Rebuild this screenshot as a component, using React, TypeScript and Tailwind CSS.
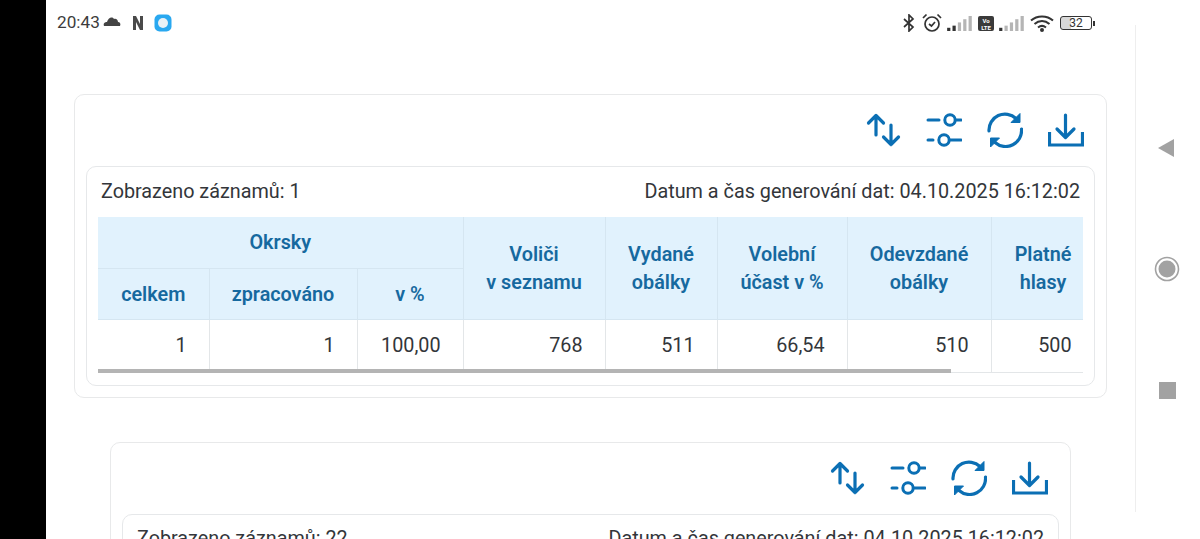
import React from "react";

const C = "#0b6fb4";

function SortIcon() {
  return (
    <svg width="36" height="36" viewBox="0 0 36 36" fill="none" stroke={C} strokeWidth="3.2" strokeLinecap="round" strokeLinejoin="round">
      <path d="M11 3.5V23M3.5 11L11 3.5L18.5 11" />
      <path d="M26 13V32.5M18.5 25L26 32.5L33.5 25" />
    </svg>
  );
}
function SlidersIcon() {
  return (
    <svg width="36" height="36" viewBox="0 0 36 36" fill="none" stroke={C} strokeWidth="3" strokeLinecap="round">
      <path d="M2 8H13" />
      <circle cx="24" cy="8" r="5.2" />
      <path d="M30 8H35" />
      <path d="M2 28H7" />
      <circle cx="18" cy="28" r="5.2" />
      <path d="M24 28H35" />
    </svg>
  );
}
function RefreshIcon() {
  return (
    <svg width="36" height="36" viewBox="0 0 36 36" fill="none">
      <path d="M2 19A16 16 0 0 1 29 6.5" stroke={C} strokeWidth="3.2" strokeLinecap="round" />
      <path d="M34.5 17A16 16 0 0 1 8 30.5" stroke={C} strokeWidth="3.2" strokeLinecap="round" />
      <path d="M33 1.5V10.5H24Z" fill={C} stroke={C} strokeWidth="1" strokeLinejoin="round" />
      <path d="M3.5 35V26H12.5Z" fill={C} stroke={C} strokeWidth="1" strokeLinejoin="round" />
    </svg>
  );
}
function DownloadIcon() {
  return (
    <svg width="36" height="36" viewBox="0 0 36 36" fill="none" stroke={C} strokeWidth="3.2">
      <path d="M1.5 20V33H34.5V20" strokeLinecap="butt" />
      <path d="M17.5 3V25M9 17L17.5 25.5L26 17" strokeLinecap="round" strokeLinejoin="round" />
    </svg>
  );
}

function Toolbar() {
  return (
    <div className="flex justify-end gap-[25px] pr-[11px] pt-[17px] h-[71px]">
      <SortIcon />
      <SlidersIcon />
      <RefreshIcon />
      <DownloadIcon />
    </div>
  );
}

const th = "border-r border-b border-[#d5e6f1] bg-[#e1f2fd] text-[#16699f] font-semibold text-[19.8px] leading-[28px] text-center align-middle p-0 pt-[2px]";
const td = "border-r border-b border-[#e3e6e8] text-[#33363a] text-[19.8px] text-right align-middle p-0 pr-[22px]";

function DataTable() {
  return (
    <div className="relative mx-[11px] overflow-hidden">
      <table className="table-fixed border-collapse w-[1200px]">
        <colgroup>
          <col className="w-[111px]" />
          <col className="w-[148px]" />
          <col className="w-[106px]" />
          <col className="w-[142px]" />
          <col className="w-[112px]" />
          <col className="w-[130px]" />
          <col className="w-[144px]" />
          <col className="w-[144px]" />
          <col className="w-[163px]" />
        </colgroup>
        <thead>
          <tr className="h-[51px]">
            <th colSpan={3} className={th}>Okrsky</th>
            <th rowSpan={2} className={th}>Voliči<br />v seznamu</th>
            <th rowSpan={2} className={th}>Vydané<br />obálky</th>
            <th rowSpan={2} className={th}>Volební<br />účast v %</th>
            <th rowSpan={2} className={th}>Odevzdané<br />obálky</th>
            <th rowSpan={2} className={`${th} pr-[40px]`}>Platné<br />hlasy</th>
            <th rowSpan={2} className={th}></th>
          </tr>
          <tr className="h-[51px]">
            <th className={th}>celkem</th>
            <th className={th}>zpracováno</th>
            <th className={th}>v %</th>
          </tr>
        </thead>
        <tbody>
          <tr className="h-[53px]">
            <td className={td}>1</td>
            <td className={td}>1</td>
            <td className={td}>100,00</td>
            <td className={td}>768</td>
            <td className={td}>511</td>
            <td className={td}>66,54</td>
            <td className={td}>510</td>
            <td className={`${td} pr-[63px]`}>500</td>
            <td className={td}></td>
          </tr>
        </tbody>
      </table>
      <div className="absolute left-0 bottom-0 h-[4px] w-[853px] bg-[#b4b4b4]" />
    </div>
  );
}

function InnerCard({ count }: { count: number }) {
  return (
    <div className="border border-[#e6e8ea] rounded-[10px] bg-white pb-[12px]">
      <div className="flex justify-between items-center h-[50px] pb-[1px] px-[14px] text-[19.8px] text-[#33363a]">
        <span>Zobrazeno záznamů: {count}</span>
        <span>Datum a čas generování dat: 04.10.2025 16:12:02</span>
      </div>
      <DataTable />
    </div>
  );
}

function StatusBar() {
  return (
    <div className="flex justify-between items-center h-[46px] pl-[11px] pr-[40px] text-[#3c3c3c]">
      <div className="flex items-center">
        <span className="text-[17.2px] w-[46px]">20:43</span>
        <svg width="18" height="10" viewBox="0 0 18 10" className="mb-[3px]">
          <path d="M1 10C0 7 2 6 4 6C5 2 9 0 11 3C13 2 15 4 15 6C17 6 18 8 17 10Z" fill="#444" />
        </svg>
        <svg width="12" height="16" viewBox="0 0 12 16" className="ml-[11px]">
          <path d="M1 1H4L8 9V1H11V15H8L4 7V15H1Z" fill="#4a4a4a" />
        </svg>
        <svg width="18" height="18" viewBox="0 0 18 18" className="ml-[10px]">
          <rect x="0.5" y="0.5" width="17" height="17" rx="5" fill="#29a8f0" />
          <circle cx="9" cy="9" r="5" fill="#e9f1f6" />
        </svg>
      </div>
      <div className="flex items-center gap-[5px]">
        <svg width="12" height="18" viewBox="0 0 12 18" fill="none" stroke="#333" strokeWidth="1.7">
          <path d="M1 5L10 13L6 17V1L10 5L1 13" />
        </svg>
        <svg width="20" height="20" viewBox="0 0 20 20" fill="none" stroke="#333" strokeWidth="1.7" className="ml-[2px]">
          <circle cx="10" cy="11" r="7" />
          <path d="M7 11L9.5 13L13 9" />
          <path d="M1 5L4.5 1.5M19 5L15.5 1.5" />
        </svg>
        <svg width="26" height="15" viewBox="0 0 24 14">
          <rect x="0" y="11" width="3" height="3" fill="#333" />
          <rect x="5" y="9" width="3" height="5" fill="#333" />
          <rect x="10" y="6" width="3" height="8" fill="#b5b5b5" />
          <rect x="15" y="3" width="3" height="11" fill="#b5b5b5" />
          <rect x="20" y="0" width="3" height="14" fill="#b5b5b5" />
        </svg>
        <div className="w-[16px] h-[15px] rounded-[2px] bg-[#3a3a3a] text-white text-[6px] leading-[7px] font-bold text-center pt-[1px]">
          Vo<br />LTE
        </div>
        <svg width="26" height="15" viewBox="0 0 24 14">
          <rect x="0" y="11" width="3" height="3" fill="#333" />
          <rect x="5" y="9" width="3" height="5" fill="#b5b5b5" />
          <rect x="10" y="6" width="3" height="8" fill="#b5b5b5" />
          <rect x="15" y="3" width="3" height="11" fill="#b5b5b5" />
          <rect x="20" y="0" width="3" height="14" fill="#b5b5b5" />
        </svg>
        <svg width="24" height="17" viewBox="0 0 24 17" fill="none" stroke="#333" strokeWidth="2">
          <path d="M1 5.5C7 0 17 0 23 5.5" />
          <path d="M4.5 9C9 5 15 5 19.5 9" />
          <path d="M8 12.5C10.5 10.5 13.5 10.5 16 12.5" />
          <circle cx="12" cy="15" r="1" fill="#333" />
        </svg>
        <div className="flex items-center ml-[1px]">
          <div className="w-[32px] h-[14px] border border-[#333] rounded-[3px] text-[12px] leading-[12px] text-center text-[#333] bg-[linear-gradient(90deg,#d8d8d8_32%,#fff_32%)]">
            32
          </div>
          <div className="w-[2px] h-[5px] bg-[#333] ml-[1px]" />
        </div>
      </div>
    </div>
  );
}

function NavBar() {
  return (
    <div className="w-[65px] shrink-0 py-[25px] h-[539px]">
      <div className="h-[487px] border-l border-[#eeeeee] flex flex-col items-center pr-[2px] pt-[113px]">
        <svg width="17" height="20" viewBox="0 0 17 20" className="ml-[-4px]"><path d="M17 1V19L1 10Z" fill="#a2a2a2" /></svg>
        <svg width="26" height="26" viewBox="0 0 26 26" className="mt-[98px]">
          <circle cx="13" cy="13" r="11.5" fill="none" stroke="#a2a2a2" strokeWidth="1.6" />
          <circle cx="13" cy="13" r="8.5" fill="#a2a2a2" />
        </svg>
        <div className="w-[17px] h-[17px] bg-[#a2a2a2] mt-[100px]" />
      </div>
    </div>
  );
}

export default function App() {
  return (
    <div className="flex h-[539px] w-[1200px] overflow-hidden bg-white font-['Roboto',sans-serif]">
      <div className="w-[46px] shrink-0 bg-black" />
      <div className="flex-1 min-w-0">
        <StatusBar />
        <div className="mx-[28px] mt-[48px] border border-[#e8e9ea] rounded-[10px] px-[11px] pb-[11px]">
          <Toolbar />
          <InnerCard count={1} />
        </div>
        <div className="mx-[64px] mt-[44px] border border-[#e8e9ea] rounded-[10px] px-[11px] pb-[11px]">
          <Toolbar />
          <InnerCard count={22} />
        </div>
      </div>
      <NavBar />
    </div>
  );
}
